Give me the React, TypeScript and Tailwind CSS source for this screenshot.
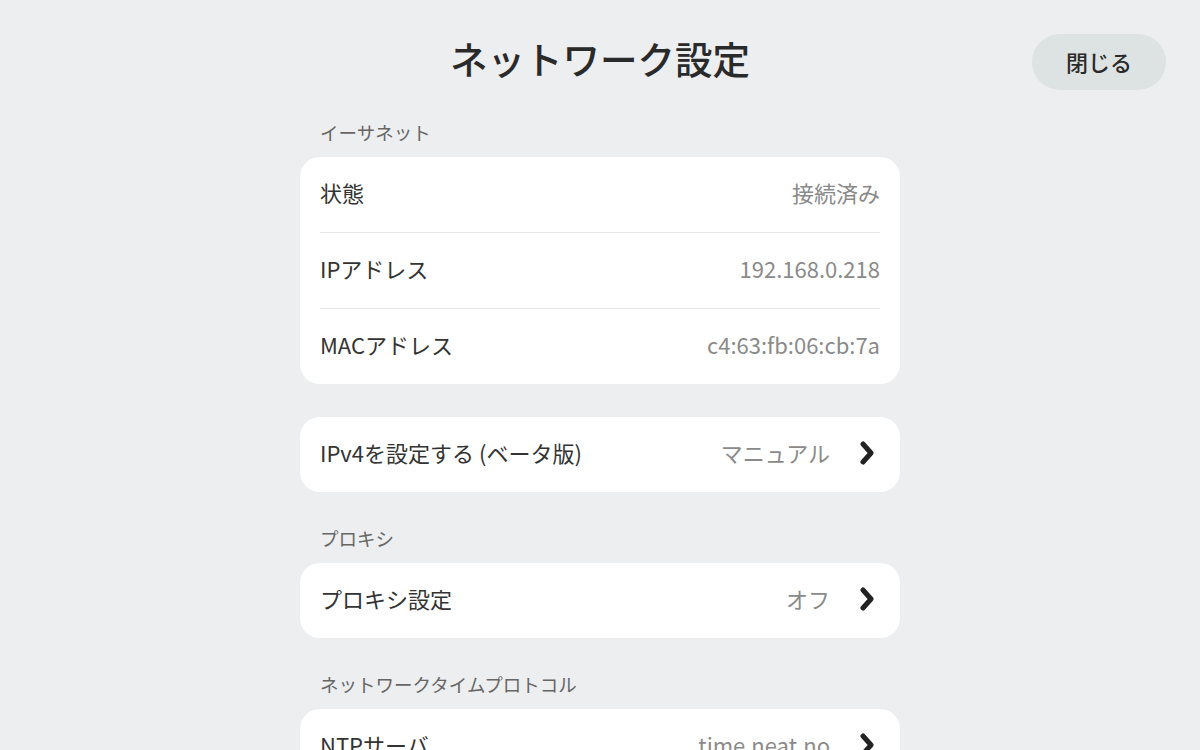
import React from 'react'

const Chevron = () => (
  <svg width="20" height="26" viewBox="0 0 20 26" className="ml-[30px] shrink-0">
    <path
      d="M3 4 L11 13 L3 22"
      fill="none"
      stroke="#222"
      strokeWidth="5"
      strokeLinecap="round"
      strokeLinejoin="round"
    />
  </svg>
)

const Row = ({ label, value, chevron = false, divider = false }) => (
  <div className="px-5">
    <div
      className={`flex items-center justify-between pb-[4px] ${divider ? 'h-[76px] border-b border-[#e6e6e8]' : 'h-[75px]'}`}
    >
      <div className="text-[22px] text-[#333]">{label}</div>
      <div className="flex items-center">
        <div className="text-[22px] text-[#8a8a8a]">{value}</div>
        {chevron && <Chevron />}
      </div>
    </div>
  </div>
)

const SectionLabel = ({ children }) => (
  <div className="px-5 pb-[13px] text-[18.5px] leading-[24px] text-[#666]">
    {children}
  </div>
)

const Card = ({ children }) => (
  <div className="overflow-hidden rounded-[20px] bg-white">{children}</div>
)

export default function App() {
  return (
    <div
      className="h-[750px] w-[1200px] overflow-hidden bg-[#edeef0]"
      style={{ fontFamily: '"Noto Sans CJK JP", "Noto Sans", sans-serif' }}
    >
      <div className="relative flex h-[120px] items-start justify-center pt-[32px]">
        <h1 className="text-[37.5px] font-medium leading-[52px] text-[#2a2a2a]">
          ネットワーク設定
        </h1>
        <button className="absolute right-[34px] top-[34px] h-[56px] w-[134px] rounded-full bg-[#dde2e2] pb-[2px] text-[22px] font-medium text-[#2a2a2a]">
          閉じる
        </button>
      </div>

      <div className="mx-auto flex w-[600px] flex-col">
        <SectionLabel>イーサネット</SectionLabel>
        <Card>
          <Row label="状態" value="接続済み" divider />
          <Row label="IPアドレス" value="192.168.0.218" divider />
          <Row label="MACアドレス" value="c4:63:fb:06:cb:7a" />
        </Card>

        <div className="mt-[33px]">
          <Card>
            <Row label="IPv4を設定する (ベータ版)" value="マニュアル" chevron />
          </Card>
        </div>

        <div className="mt-[34px]">
          <SectionLabel>プロキシ</SectionLabel>
          <Card>
            <Row label="プロキシ設定" value="オフ" chevron />
          </Card>
        </div>

        <div className="mt-[34px]">
          <SectionLabel>ネットワークタイムプロトコル</SectionLabel>
          <Card>
            <Row label="NTPサーバ" value="time.neat.no" chevron />
          </Card>
        </div>
      </div>
    </div>
  )
}
